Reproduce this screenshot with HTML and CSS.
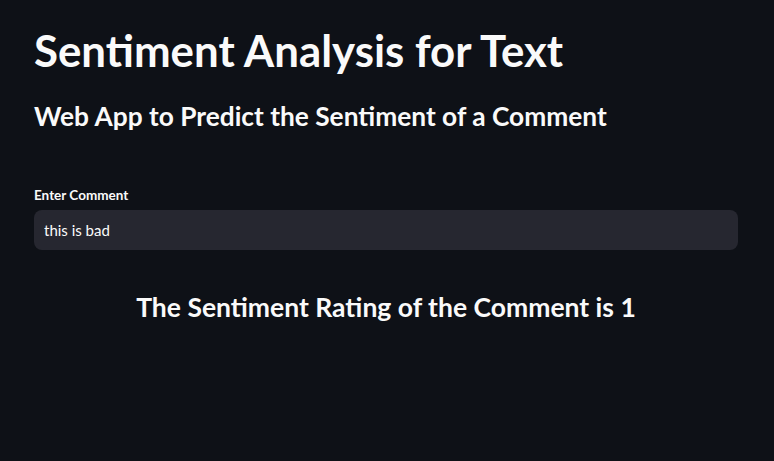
FILE: index.html
```html
<!DOCTYPE html>
<html>
<head>
<meta charset="utf-8">
<link rel="stylesheet" href="styles.css">
</head>
<body>
<main class="app">
  <h1 class="title">Sentiment Analysis for Text</h1>
  <h2 class="subtitle">Web App to Predict the Sentiment of a Comment</h2>
  <div class="field">
    <label class="label" for="comment">Enter Comment</label>
    <div class="input-box"><input id="comment" class="input" type="text" value="this is bad"></div>
  </div>
  <h3 class="result">The Sentiment Rating of the Comment is 1</h3>
</main>
</body>
</html>
```
FILE: styles.css
```css
html, body {
  margin: 0;
  padding: 0;
  background: #0e1117;
  height: 100%;
}
body {
  font-family: "Lato", "Open Sans", sans-serif;
  color: #fafafa;
}
.app {
  padding: 22px 36px 0 34px;
  display: flex;
  flex-direction: column;
}
.title {
  margin: 0;
  font-size: 43.8px;
  font-weight: 700;
  line-height: 56px;
}
.subtitle {
  margin: 20px 0 0;
  font-size: 26.3px;
  font-weight: 700;
  line-height: 36px;
}
.field {
  margin-top: 52px;
  display: flex;
  flex-direction: column;
  gap: 6px;
}
.label {
  font-size: 13.5px;
  font-weight: 700;
  line-height: 18px;
}
.input-box {
  background: #262730;
  border-radius: 8px;
  height: 40px;
  display: flex;
  align-items: center;
}
.input {
  background: transparent;
  border: 0;
  outline: none;
  color: #fafafa;
  font-family: inherit;
  font-size: 15px;
  padding: 0 10px;
  width: 100%;
}
.result {
  margin: 41px 0 0;
  text-align: center;
  font-size: 26.5px;
  font-weight: 700;
  line-height: 32px;
}
```
